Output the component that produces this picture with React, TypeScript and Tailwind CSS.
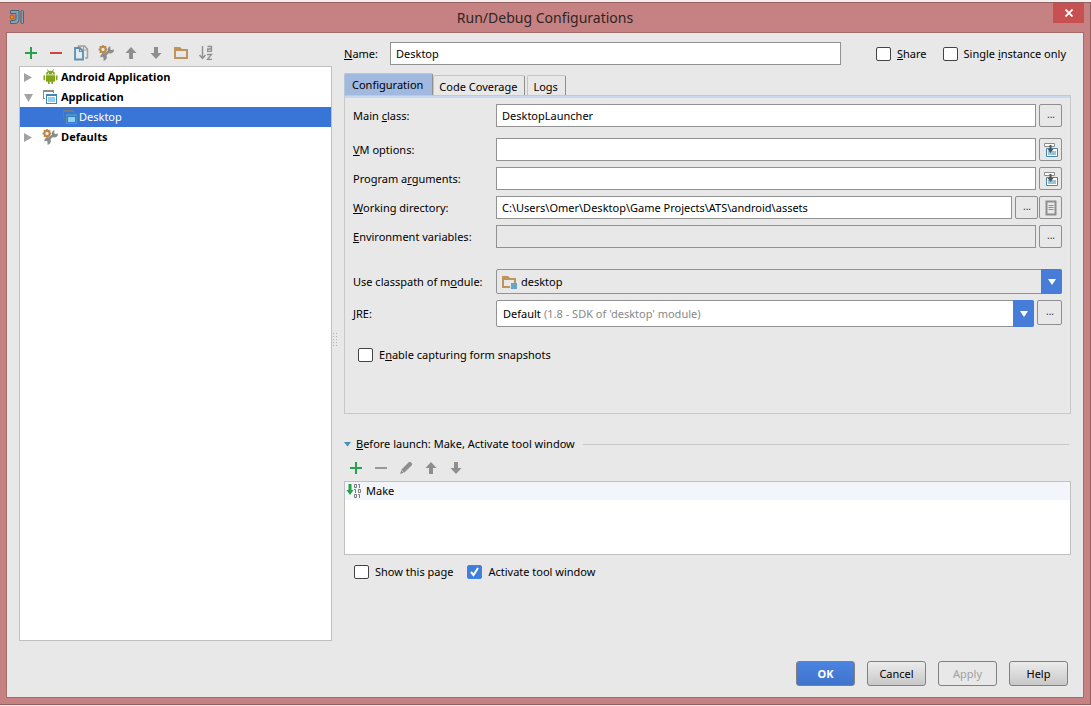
import { useState } from 'react';
import type { ReactNode } from 'react';

interface IconProps {
  children: ReactNode;
  size?: number;
}

function Icon({ children, size = 16 }: IconProps) {
  return (
    <svg width={size} height={size} viewBox="0 0 16 16" fill="none" className="block shrink-0" aria-hidden="true">
      {children}
    </svg>
  );
}

const LogoIcon = () => (
  <Icon>
    <path d="M1.500 1.500h8.500v8.700q0 4.300-4.500 4.300H1.500v-3h3.500q2 0 2-2V4.500H1.500z" fill="#7fa3b5" stroke="#456475" />
    <rect x="12" y="1.500" width="2.500" height="13" rx="1" fill="#7fa3b5" stroke="#456475" />
    <circle cx="3" cy="8" r="2" fill="#f08a1c" stroke="#a34f10" strokeWidth="0.8" />
  </Icon>
);

const PlusIcon = () => (
  <Icon>
    <path d="M7 2h2v5h5v2H9v5H7V9H2V7h5z" fill="#28a148" />
  </Icon>
);

const MinusIcon = ({ color }: { color: string }) => (
  <Icon>
    <rect x="2" y="7" width="12" height="2" fill={color} />
  </Icon>
);

const CopyIcon = () => (
  <Icon>
    <path d="M5.500 2.500V1H11.500L14.500 4v9H12" stroke="#a0a0a0" strokeWidth="1.500" />
    <path d="M10.500 1v4h4" stroke="#a0a0a0" strokeWidth="1.200" />
    <path d="M2 3h5L10 6V14.500H2z" fill="#e4eaee" stroke="#5a90b1" strokeWidth="1.800" />
    <path d="M6.500 3v3.500h3.500" stroke="#5a90b1" strokeWidth="1.200" />
  </Icon>
);

const WrenchIcon = () => (
  <Icon>
    <path
      d="M10 5.500Q9.300 2 12.300 1.200V4.200l1 .8 2.700-.4q0 3.400-3.200 3.800-1.300.1-2-.3L8.600 10.300q1 3-.9 4.500-1 .8-2.200.9V12.700l-1-.9-2.300.8q-.3-2.900 2-3.900 1-.4 2-.2z"
      fill="#8c8c8c"
    />
    <circle cx="5" cy="4.500" r="2.700" fill="#e8e8e8" stroke="#be8742" strokeWidth="2" />
    <path d="M5 0v1.500M5 7.500V9M.5 4.500H2M8 4.500h1.500M1.800 1.300l1 1M8.200 1.300l-1 1M1.800 7.700l1-1" stroke="#be8742" strokeWidth="1.500" />
  </Icon>
);

const UpIcon = () => (
  <Icon>
    <path d="M8 2 13.500 8H10v6H6V8H2.500z" fill="#8e8e8e" />
  </Icon>
);

const DownIcon = () => (
  <Icon>
    <path d="M8 14 2.500 8H6V2h4v6h3.500z" fill="#8e8e8e" />
  </Icon>
);

const FolderIcon = () => (
  <Icon>
    <path d="M1 2h6l2 2h6v10H1zM3 6v6h10V6z" fill="#be945c" fillRule="evenodd" />
  </Icon>
);

const SortIcon = () => (
  <Icon>
    <path d="M4.500 1v12M1.500 10l3 3.500 3-3.500" stroke="#8e8e8e" strokeWidth="1.400" />
    <path d="M9.500 1.500h4v5M13.500 4H9.700v2.300h4" stroke="#8e8e8e" strokeWidth="1.300" />
    <path d="M9 9.500h4.500L9.500 14.300H14" stroke="#8e8e8e" strokeWidth="1.300" />
  </Icon>
);

const PencilIcon = () => (
  <Icon>
    <path d="M2 14l1.500-4.500L10.500 2.500q1-1 2-.5l1.500 1.500q.5 1-.5 2L6.500 12.500z" fill="#8e8e8e" />
    <path d="M3.200 10l2.800 2.800" stroke="#e8e8e8" strokeWidth="0.700" />
  </Icon>
);

const AndroidIcon = () => (
  <Icon>
    <path d="M5.500 0.500 7 3M11.500 0.500 10 3" stroke="#83a51b" />
    <path d="M4 5.500q0-3.700 4.500-3.700t4.500 3.700zM4 6.300h9V12q0 .8-.8.800H11V15H9.300v-2.200H7.700V15H6v-2.200H4.800q-.8 0-.8-.8z" fill="#83a51b" />
    <path d="M2.300 7v3.500M14.700 7v3.500" stroke="#83a51b" strokeWidth="1.700" strokeLinecap="round" />
    <path d="M6 3.700h1v1H6zM10 3.700h1v1h-1z" fill="#fff" />
  </Icon>
);

const AppIcon = ({ selected = false }: { selected?: boolean }) => (
  <Icon>
    <path d="M1 1h11v3h-1V3H2v6h1v1H1z" fill={selected ? '#78797d' : '#8c8c8c'} />
    <path d="M4 5h11v10H4z" fill={selected ? '#4a96b8' : '#3f88b5'} />
    <path d="M5 7h9v7H5z" fill={selected ? '#3875d7' : '#fff'} />
    <path d="M6 8h7v5H6z" fill="#8fd0f5" />
  </Icon>
);

const ModuleIcon = () => (
  <Icon>
    <path d="M1 2h6l2 2h6v5h-2V6H3v6h6v2H1z" fill="#be945c" />
    <rect x="10" y="9" width="6" height="6" fill="#6aa5c8" />
  </Icon>
);

const MacroIcon = () => (
  <Icon>
    <path d="M1.500 1.500h10v3h-10z" fill="#fff" stroke="#8c8c8c" />
    <path d="M3.500 6.500h11v8h-11z" fill="#fff" stroke="#3f88b5" />
    <path d="M5 9h8v4H5z" fill="#9ac3d8" />
    <path d="M6.500 3h2v4h2L7.500 11 4.500 7h2z" fill="#555" />
  </Icon>
);

const PageIcon = () => (
  <Icon>
    <path d="M3.500 1.500h9v13h-9z" stroke="#8e8e8e" strokeWidth="2" />
    <path d="M5.500 5.500h5M5.500 7.500h5M5.500 9.500h5" stroke="#8e8e8e" />
  </Icon>
);

const MakeIcon = () => (
  <Icon>
    <path d="M2.500 1h3v6H7.500L4 12 .5 7h2z" fill="#2a9f47" />
    <g stroke="#7a7a7a">
      <path d="M8.500 1.500h2v3h-2zM8.500 11.500h2v3h-2zM12.500 6.500h2v3h-2zM12 1.500h1.500V5M12 11.500h1.500V15M8 6.500h1.500V10" />
    </g>
  </Icon>
);

const Arrow = ({ open = false }: { open?: boolean }) => (
  <svg width="9" height="9" viewBox="0 0 9 9" className="shrink-0" aria-hidden="true">
    <path d={open ? 'M0 1h9L4.500 9z' : 'M0 0v9l8-4.500z'} fill="#a3a3a3" />
  </svg>
);

function ToolButton({ label, children }: { label: string; children: ReactNode }) {
  return (
    <button type="button" aria-label={label} className="flex h-5 w-[25px] items-center pl-1">
      {children}
    </button>
  );
}

function SmallButton({ label, large = false, children }: { label: string; large?: boolean; children?: ReactNode }) {
  return (
    <button
      type="button"
      aria-label={label}
      className={`flex shrink-0 items-center justify-center rounded-xs border border-[#8f8f8f] bg-[#e8e8e8] ${
        large ? 'size-[25px]' : 'size-[23px]'
      }`}
    >
      {children ?? <span className="pb-1 pl-px text-[10px] leading-3 text-[#333]">...</span>}
    </button>
  );
}

function Check({ children, initial = false }: { children: ReactNode; initial?: boolean }) {
  const [checked, setChecked] = useState(initial);

  return (
    <label className="flex items-center gap-1.5 whitespace-nowrap">
      <span className="relative flex">
        <input
          type="checkbox"
          checked={checked}
          onChange={() => setChecked(!checked)}
          className="h-3.5 w-[15px] appearance-none rounded-xs border border-[#444] bg-white checked:border-[#3b86e8] checked:bg-[#417ddb]"
        />
        {checked && (
          <svg width="15" height="14" viewBox="0 0 15 14" className="pointer-events-none absolute inset-0" fill="none" aria-hidden="true">
            <path d="M4 7l2.500 3L11 3" stroke="#fff" strokeWidth="2" />
          </svg>
        )}
      </span>
      <span>{children}</span>
    </label>
  );
}

function Row({ id, label, children }: { id: string; label: ReactNode; children: ReactNode }) {
  return (
    <div className="flex items-center">
      <label htmlFor={id} className="w-[143px] shrink-0 whitespace-nowrap">
        {label}
      </label>
      <div className="flex min-w-0 flex-1 items-start gap-[3px]">{children}</div>
    </div>
  );
}

function DropArrow() {
  return (
    <span className="pointer-events-none absolute inset-y-0 right-0 flex w-[21px] items-center justify-center rounded-r-xs bg-[#477dd8]">
      <svg width="8" height="6" viewBox="0 0 8 6" aria-hidden="true">
        <path d="M0 0h8L4 6z" fill="#fff" />
      </svg>
    </span>
  );
}

const inputClass = 'h-[23px] min-w-0 flex-1 border border-[#929292] bg-white px-[5px] outline-none';
const sideTab = 'mr-0.5 h-5 rounded-t-xs border border-b-0 border-[#c4c4c4] border-r-[#8f8f8f] pt-0.5 pr-[7px] pl-[5px]';
const footerButton = 'h-[25px] w-[59px] rounded-[3px] border border-[#808080]';
const treeLabel = 'ml-[9px] flex items-center gap-[3px]';

function Tree() {
  return (
    <ul
      role="tree"
      aria-label="Configurations"
      className="flex-1 border border-[#c0c0c0] bg-white font-['Open_Sans','Noto_Sans',sans-serif] font-bold"
    >
      <li role="treeitem" className="flex h-5 items-center px-1">
        <Arrow />
        <span className={treeLabel}>
          <AndroidIcon />
          Android Application
        </span>
      </li>
      <li role="treeitem" aria-expanded="true">
        <div className="flex h-5 items-center px-1">
          <Arrow open />
          <span className={treeLabel}>
            <AppIcon />
            Application
          </span>
        </div>
        <ul role="group">
          <li
            role="treeitem"
            aria-selected="true"
            className="flex h-5 items-center gap-px bg-[#3875d7] pl-[42px] font-['Noto_Sans','Open_Sans',sans-serif] font-normal text-white"
          >
            <AppIcon selected />
            Desktop
          </li>
        </ul>
      </li>
      <li role="treeitem" className="flex h-5 items-center px-1">
        <Arrow />
        <span className={treeLabel}>
          <WrenchIcon />
          Defaults
        </span>
      </li>
    </ul>
  );
}

function ConfigurationForm() {
  return (
    <div className="h-[316px] border border-t-0 border-[#c8c8c8] px-2 pt-1.5">
      <Row id="main-class" label={<>Main <u>c</u>lass:</>}>
        <input id="main-class" defaultValue="DesktopLauncher" className={inputClass} />
        <SmallButton label="Browse main class" />
      </Row>
      <div className="mt-[11px] flex flex-col gap-1.5">
        <Row id="vm" label={<><u>V</u>M options:</>}>
          <input id="vm" className={inputClass} />
          <SmallButton label="Expand VM options"><MacroIcon /></SmallButton>
        </Row>
        <Row id="args" label={<>Program a<u>r</u>guments:</>}>
          <input id="args" className={inputClass} />
          <SmallButton label="Expand program arguments"><MacroIcon /></SmallButton>
        </Row>
        <Row id="dir" label={<><u>W</u>orking directory:</>}>
          <input id="dir" defaultValue="C:\Users\Omer\Desktop\Game Projects\ATS\android\assets" className={inputClass} />
          <div className="flex gap-px">
            <SmallButton label="Browse directory" />
            <SmallButton label="Insert macro"><PageIcon /></SmallButton>
          </div>
        </Row>
        <Row id="env" label={<><u>E</u>nvironment variables:</>}>
          <input id="env" readOnly className="h-[23px] min-w-0 flex-1 border border-[#929292] px-[5px] outline-none" />
          <SmallButton label="Edit environment variables" />
        </Row>
      </div>
      <div className="mt-[21px] flex flex-col gap-1.5">
        <Row id="module" label={<>Use classpath of m<u>o</u>dule:</>}>
          <div className="relative flex flex-1">
            <span className="pointer-events-none absolute inset-y-0 left-[5px] flex items-center">
              <ModuleIcon />
            </span>
            <select id="module" className="h-[25px] w-full appearance-none rounded-xs border border-[#929292] pl-6">
              <option>desktop</option>
            </select>
            <DropArrow />
          </div>
        </Row>
        <Row id="jre" label={<><u>J</u>RE:</>}>
          <div className="relative flex flex-1">
            <select id="jre" className="h-[27px] w-full appearance-none rounded-xs border border-[#929292] bg-white pl-1.5">
              <option>Default</option>
            </select>
            <span className="pointer-events-none absolute inset-y-0 left-12 flex items-center text-[#888]">
              (1.8 - SDK of 'desktop' module)
            </span>
            <DropArrow />
          </div>
          <SmallButton label="Browse JRE" large />
        </Row>
      </div>
      <div className="mt-5 ml-[5px]">
        <Check>E<u>n</u>able capturing form snapshots</Check>
      </div>
    </div>
  );
}

function BeforeLaunch() {
  return (
    <section className="mt-[22px]">
      <div className="flex h-4 items-center">
        <svg width="7" height="5" viewBox="0 0 7 5" aria-hidden="true">
          <path d="M0 0h7L3.500 4.500z" fill="#4390bc" />
        </svg>
        <h2 className="ml-[5px]"><u>B</u>efore launch: Make, Activate tool window</h2>
        <span className="mr-0.5 ml-2 h-px flex-1 bg-[#c8c8c8]" />
      </div>
      <div className="mt-1.5 flex">
        <ToolButton label="Add task"><PlusIcon /></ToolButton>
        <ToolButton label="Remove task"><MinusIcon color="#999" /></ToolButton>
        <ToolButton label="Edit task"><PencilIcon /></ToolButton>
        <ToolButton label="Move task up"><UpIcon /></ToolButton>
        <ToolButton label="Move task down"><DownIcon /></ToolButton>
      </div>
      <ul className="mt-[3px] h-[74px] border border-[#c0c0c0] bg-white">
        <li className="flex h-[18px] items-center gap-1 bg-[#f2f5fa] pl-px">
          <MakeIcon />
          Make
        </li>
      </ul>
      <div className="mt-[9px] ml-2.5 flex gap-3.5">
        <Check>Show this page</Check>
        <Check initial>Activate tool window</Check>
      </div>
    </section>
  );
}

export default function App() {
  return (
    <div className="flex min-h-screen flex-col bg-[#f5eeee] pt-0.5 pb-px font-['Noto_Sans','Open_Sans',sans-serif] text-[11px] leading-4 text-black">
      <div className="flex flex-1 flex-col border-y border-r border-[#955f5f] bg-[#c68282] px-1.5 pb-1.5">
        <header className="relative flex h-[29px] items-center justify-center">
          <span className="absolute top-1.5 left-[3px]">
            <LogoIcon />
          </span>
          <h1 className="text-sm text-[#2f2525]">Run/Debug Configurations</h1>
          <button type="button" aria-label="Close" className="absolute top-0 right-0 flex h-5 w-[31px] items-center justify-center bg-[#c75050]">
            <svg width="8" height="8" viewBox="0 0 8 8" aria-hidden="true">
              <path d="M.5.5l7 7M7.500.5l-7 7" stroke="#fff" strokeWidth="1.800" />
            </svg>
          </button>
        </header>

        <main className="flex flex-1 flex-col border border-[#a56b6b] bg-[#e8e8e8] px-3 pb-[11px]">
          <div className="flex flex-1">
            <div className="flex w-[313px] shrink-0 flex-col pt-2.5">
              <div className="mb-[3px] flex">
                <ToolButton label="Add"><PlusIcon /></ToolButton>
                <ToolButton label="Remove"><MinusIcon color="#c9473f" /></ToolButton>
                <ToolButton label="Copy"><CopyIcon /></ToolButton>
                <ToolButton label="Edit defaults"><WrenchIcon /></ToolButton>
                <ToolButton label="Move up"><UpIcon /></ToolButton>
                <ToolButton label="Move down"><DownIcon /></ToolButton>
                <ToolButton label="New folder"><FolderIcon /></ToolButton>
                <ToolButton label="Sort"><SortIcon /></ToolButton>
              </div>
              <Tree />
            </div>

            <div className="flex w-3 shrink-0 items-center pt-1.5">
              <svg width="6" height="16" viewBox="0 0 6 16" aria-hidden="true">
                <path d="M1.500 1v15M4.500 1v15" stroke="#b4b4b4" strokeDasharray="1 2" />
              </svg>
            </div>

            <div className="min-w-0 flex-1 pt-[9px]">
              <div className="flex items-center">
                <label htmlFor="name" className="w-[46px] shrink-0"><u>N</u>ame:</label>
                <input id="name" defaultValue="Desktop" className={inputClass} />
                <div className="ml-[35px] flex gap-4 pr-[5px]">
                  <Check><u>S</u>hare</Check>
                  <Check>Single <u>i</u>nstance only</Check>
                </div>
              </div>

              <div role="tablist" className="mt-2 flex items-end">
                <button type="button" role="tab" aria-selected="true" className="h-[22px] rounded-t-xs border border-b-0 border-[#b8c4d8] border-r-[#8f8f8f] bg-[#a1b8df] pr-[9px] pl-[7px]">
                  Configuration
                </button>
                <button type="button" role="tab" aria-selected="false" className={sideTab}>Code Coverage</button>
                <button type="button" role="tab" aria-selected="false" className={sideTab}>Logs</button>
              </div>
              <div className="h-[3px] border border-b-0 border-[#c8c8c8] bg-[#c5daf0]" />
              <ConfigurationForm />
              <BeforeLaunch />
            </div>
          </div>

          <footer className="mt-5 flex justify-end gap-3 pr-[3px]">
            <button type="button" className={`${footerButton} bg-linear-to-b from-[#4a84e0] to-[#3f74cc] font-bold text-white`}>OK</button>
            <button type="button" className={`${footerButton} bg-linear-to-b from-[#ececec] to-[#c8c8c8]`}>Cancel</button>
            <button type="button" disabled className={`${footerButton} text-[#a0a0a0]`}>Apply</button>
            <button type="button" className={`${footerButton} bg-linear-to-b from-[#ececec] to-[#c8c8c8]`}>Help</button>
          </footer>
        </main>
      </div>
    </div>
  );
}
